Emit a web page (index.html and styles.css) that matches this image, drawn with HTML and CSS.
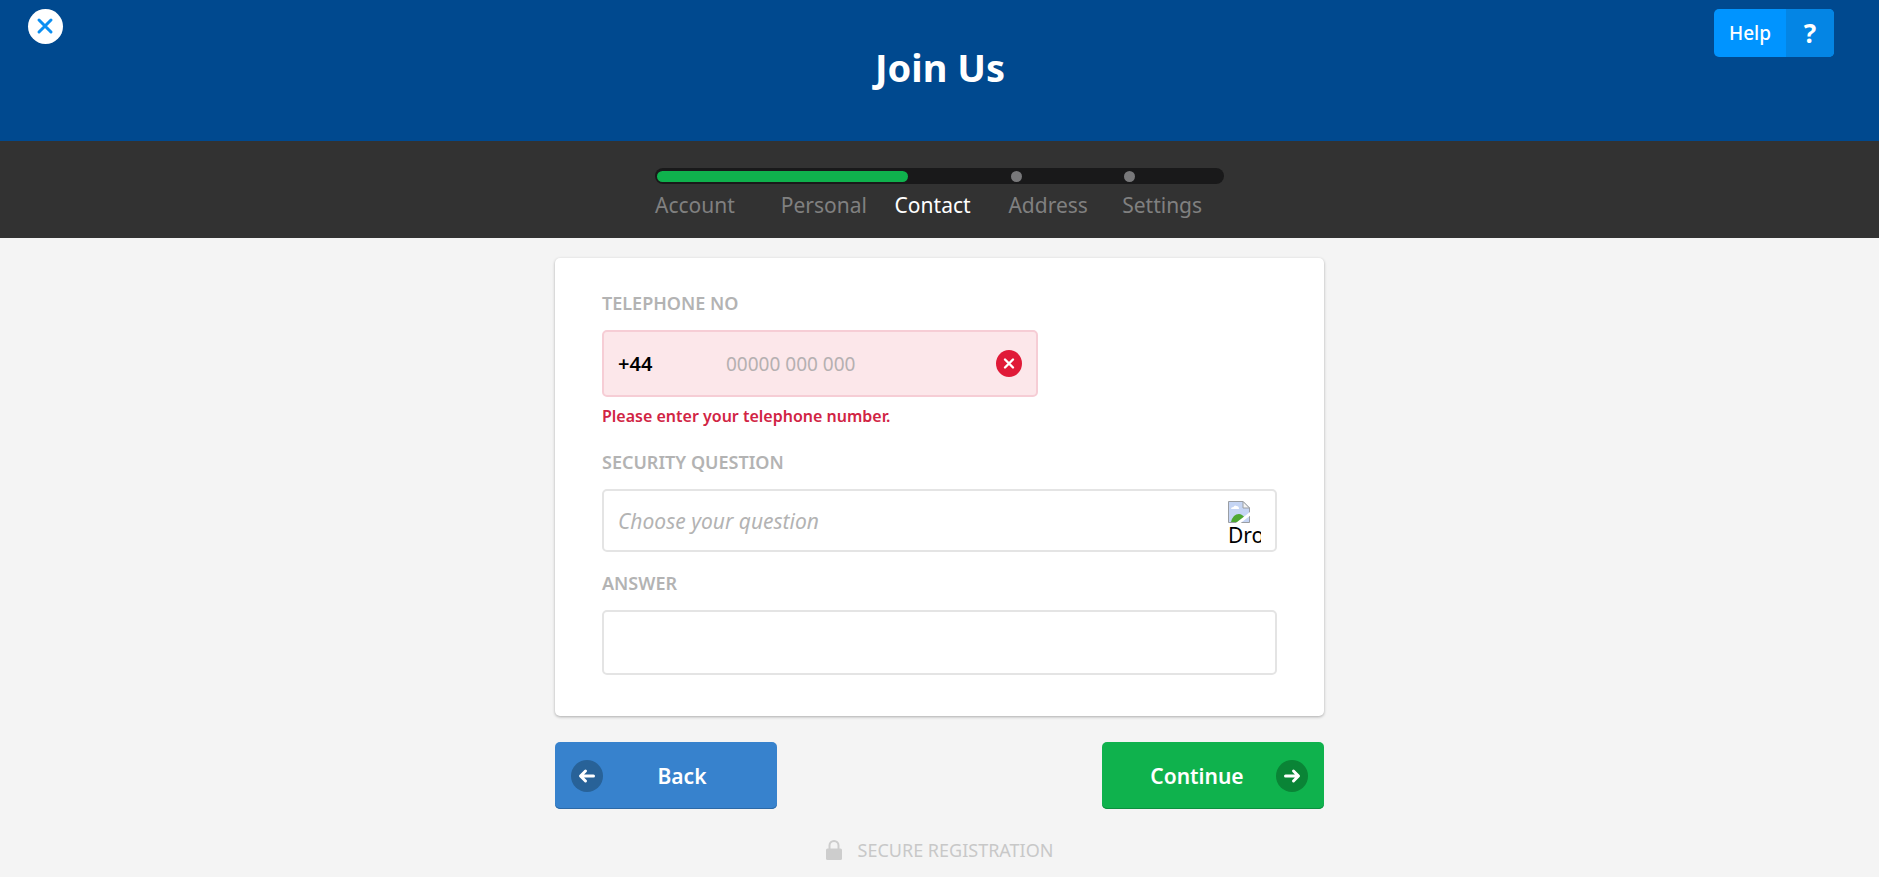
FILE: index.html
```html
<!DOCTYPE html>
<html lang="en">
<head>
    <meta charset="UTF-8">
    <meta name="viewport" content="width=device-width, initial-scale=1.0">
    <title>Join Us</title>
    <link rel="stylesheet" href="styles.css">
</head>
<body>
    <header class="header">
        <button type="button" class="close" aria-label="Close">
            <svg width="35" height="35" viewBox="0 0 35 35" fill="none" stroke="#0b8ff2" stroke-width="3" stroke-linecap="round">
                <path d="M11 11 L23 23 M23 11 L11 23"/>
            </svg>
        </button>
        <h1>Join Us</h1>
        <button type="button" class="help">
            <span class="help-text">Help</span>
            <span class="help-mark">?</span>
        </button>
    </header>

    <nav class="progress">
        <div class="track">
            <span class="track-fill"></span>
            <span class="track-dot"></span>
            <span class="track-dot"></span>
        </div>
        <ol class="steps">
            <li>Account</li>
            <li>Personal</li>
            <li class="active">Contact</li>
            <li>Address</li>
            <li>Settings</li>
        </ol>
    </nav>

    <main class="main">
        <form>
            <div class="card">
                <label class="label" for="phone">TELEPHONE NO</label>
                <div class="phone-box">
                    <span class="prefix">+44</span>
                    <input type="tel" id="phone" class="phone-input" placeholder="00000 000 000">
                    <svg width="26" height="27" viewBox="0 0 26 27">
                        <ellipse cx="13" cy="13.5" rx="13" ry="13.5" fill="#e01a38"/>
                        <path d="M9 9.5 L17 17.5 M17 9.5 L9 17.5" stroke="#fff" stroke-width="2.4" stroke-linecap="round"/>
                    </svg>
                </div>
                <p class="error">Please enter your telephone number.</p>

                <label class="label" for="question">SECURITY QUESTION</label>
                <div class="select-box">
                    <select id="question" class="field">
                        <option>Choose your question</option>
                    </select>
                    <span class="arrow">
                        <svg width="22" height="22" viewBox="0 0 22 22">
                            <path d="M0.5 0.5 H15 L21.5 7 V21.5 H0.5 Z" fill="#c5d5f4" stroke="#9a9ea3"/>
                            <path d="M3 8 Q3 6 5.5 6 Q6.5 3.5 8.5 5 Q11 5 11 8 Z" fill="#fff"/>
                            <path d="M3 21 Q5 13 11 13 Q14 13 17 17 L13 21 Z" fill="#4ea832"/>
                            <path d="M15 0.5 V7 H21.5 Z" fill="#f4f4f4" stroke="#9a9ea3"/>
                            <path d="M9 23 L23 12" stroke="#fff" stroke-width="3"/>
                        </svg>
                        <span class="arrow-text">Dro</span>
                    </span>
                </div>

                <label class="label" for="answer">ANSWER</label>
                <input type="text" id="answer" class="field answer">
            </div>

            <div class="actions">
                <button type="button" class="btn btn-back">
                    <svg width="32" height="32" viewBox="0 0 32 32">
                        <circle cx="16" cy="16" r="16" fill="#286298"/>
                        <path d="M22.5 16 H10 M14.5 11 L9.5 16 L14.5 21" fill="none" stroke="#fff" stroke-width="3" stroke-linecap="round" stroke-linejoin="round"/>
                    </svg>
                    <span>Back</span>
                </button>
                <button type="submit" class="btn btn-continue">
                    <span>Continue</span>
                    <svg width="32" height="32" viewBox="0 0 32 32">
                        <circle cx="16" cy="16" r="16" fill="#0a8436"/>
                        <path d="M9.5 16 H22 M17.5 11 L22.5 16 L17.5 21" fill="none" stroke="#fff" stroke-width="3" stroke-linecap="round" stroke-linejoin="round"/>
                    </svg>
                </button>
            </div>
        </form>

        <p class="secure">
            <svg width="16" height="20" viewBox="0 0 16 20">
                <path d="M3.5 10 V5.5 A4.5 4.5 0 0 1 12.5 5.5 V10" fill="none" stroke="#cdcdcd" stroke-width="2"/>
                <rect y="8.5" width="16" height="11.5" rx="1.5" fill="#cdcdcd"/>
            </svg>
            SECURE REGISTRATION
        </p>
    </main>
</body>
</html>
```

FILE: styles.css
```css
* {
    box-sizing: border-box;
    margin: 0;
    padding: 0;
}

body {
    font-family: "Noto Sans", sans-serif;
    font-size: 20px;
    background-color: #f4f4f4;
    color: #000;
}

button,
input,
select {
    font-family: inherit;
    font-size: 19px;
    border: none;
}

button {
    cursor: pointer;
}

/* Header */
.header {
    display: grid;
    grid-template-columns: 1fr auto 1fr;
    align-items: start;
    padding: 9px 45px 46px 28px;
    background-color: #00498f;
}

.close {
    width: 35px;
    height: 35px;
    border-radius: 50%;
    background: #fff;
}

.close svg {
    display: block;
}

h1 {
    padding-top: 30px;
    padding-left: 18px;
    font-size: 38px;
    line-height: 56px;
    font-weight: 700;
    color: #fff;
}

.help {
    display: flex;
    justify-self: end;
    border-radius: 5px;
    overflow: hidden;
    background: #0094ff;
    color: #fff;
    line-height: 48px;
    font-weight: 500;
}

.help-text {
    padding: 0 15px;
}

.help-mark {
    width: 48px;
    background: #0485e4;
    font-size: 26px;
    font-weight: 700;
}

/* Progress */
.progress {
    padding: 27px 20px 17px;
    background-color: #323232;
}

.track,
.steps {
    display: grid;
    grid-template-columns: repeat(5, 1fr);
    max-width: 569px;
    margin: 0 auto;
}

.track {
    align-items: center;
    height: 16px;
    padding: 0 2px;
    border-radius: 8px;
    background: #19191a;
}

.track-fill {
    grid-column: 1 / 4;
    width: 74%;
    height: 11px;
    border-radius: 6px;
    background: #0fb24d;
}

.track-dot {
    width: 11px;
    height: 11px;
    margin-left: 15px;
    border-radius: 50%;
    background: #78787a;
}

.steps {
    padding-top: 6px;
    list-style: none;
    font-size: 21px;
    line-height: 31px;
    color: #808080;
}

.steps li + li {
    padding-left: 12px;
}

.steps .active {
    color: #fff;
}

/* Form */
.main {
    max-width: 769px;
    margin: 20px auto 0;
}

.card {
    padding: 33px 47px 41px;
    border-radius: 5px;
    background: #fff;
    box-shadow: 0 1px 3px rgba(0, 0, 0, 0.3);
}

.label {
    display: block;
    margin-bottom: 14px;
    font-size: 18px;
    line-height: 25px;
    font-weight: 600;
    color: #b3b3b3;
}

.phone-box {
    display: flex;
    align-items: center;
    max-width: 436px;
    height: 67px;
    padding: 0 14px;
    border: 2px solid #f6cdd5;
    border-radius: 5px;
    background: #fce7ea;
}

.prefix {
    width: 108px;
    font-weight: 600;
}

.phone-input {
    flex: 1;
    min-width: 0;
    background: transparent;
    outline: none;
}

.phone-input::placeholder {
    color: #b5b0b1;
}

.error {
    margin: 7px 0 22px;
    font-size: 16px;
    line-height: 24px;
    font-weight: 600;
    color: #d12444;
}

.select-box {
    position: relative;
    margin-bottom: 19px;
}

.field {
    display: block;
    width: 100%;
    height: 63px;
    padding: 0 14px;
    border: 2px solid #e4e4e4;
    border-radius: 5px;
    background: #fff;
}

select.field {
    appearance: none;
    font-size: 21px;
    font-style: italic;
    color: #b3b3b3;
}

.answer {
    height: 65px;
}

.arrow {
    position: absolute;
    top: 12px;
    right: 16px;
    width: 33px;
    overflow: hidden;
    pointer-events: none;
}

.arrow svg,
.arrow-text {
    display: block;
}

.arrow-text {
    font-size: 21px;
    line-height: 24px;
}

/* Buttons */
.actions {
    display: flex;
    justify-content: space-between;
    margin-top: 26px;
}

.btn {
    display: flex;
    align-items: center;
    width: 222px;
    height: 67px;
    padding: 0 16px;
    border-radius: 5px;
    color: #fff;
    font-size: 21px;
    font-weight: 600;
}

.btn span {
    flex: 1;
}

.btn-back {
    background: #3782cd;
    box-shadow: inset 0 -1px 0 #2c69a6;
}

.btn-continue {
    background: #0fb24d;
    box-shadow: inset 0 -1px 0 #0c8f3e;
}

.secure {
    display: flex;
    justify-content: center;
    align-items: center;
    gap: 16px;
    padding: 28px 0 14px;
    font-size: 18px;
    line-height: 26px;
    color: #c8c8c8;
}
```
